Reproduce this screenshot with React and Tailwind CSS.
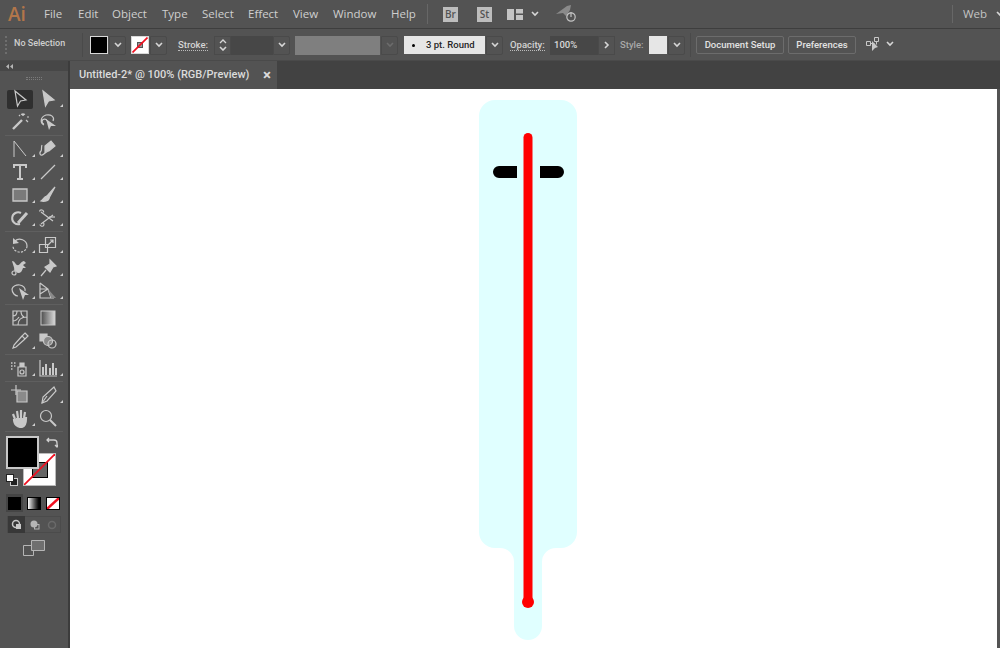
const c = "#c9c9c9";

const Chevron = ({ color = "#d6d6d6", size = 8 }) => (
  <svg className="shrink-0" width={size} height={size * 0.7} viewBox="0 0 8 5.6"><path d="M1 1l3 3 3-3" fill="none" stroke={color} strokeWidth="1.6" /></svg>
);

const ChevBox = ({ w = "w-[17px]", color, className = "" }) => (
  <div className={`${w} shrink-0 h-[19px] flex items-center justify-center border border-[#4a4a4a] rounded-r-[2px] ${className}`}><Chevron color={color} /></div>
);

const NoneSwatch = () => (
  <div className="w-[18px] h-[18px] bg-white border border-[#d8d8d8] flex items-center justify-center relative">
    <div className="w-[6px] h-[6px] border border-[#555] bg-[#999]" />
    <svg className="absolute inset-0" width="16" height="16" viewBox="0 0 16 16"><path d="M0.5 15.5L15.5 0.5" stroke="#f01020" strokeWidth="1.7" /></svg>
  </div>
);

const MenuItem = ({ children, className }) => <span className={`shrink-0 text-[11.5px] text-[#cfcfcf] leading-none ${className}`}>{children}</span>;

function MenuBar() {
  return (
    <div className="h-[29px] shrink-0 flex items-center bg-[#535353] border-b border-[#3e3e3e]">
      <span className="shrink-0 ml-[8px] w-[36px] text-[19px] font-semibold text-[#b2764a] leading-none" style={{ fontFamily: '"Open Sans"' }}>Ai</span>
      <MenuItem className="w-[34px]">File</MenuItem>
      <MenuItem className="w-[34px]">Edit</MenuItem>
      <MenuItem className="w-[50px]">Object</MenuItem>
      <MenuItem className="w-[40px]">Type</MenuItem>
      <MenuItem className="w-[46px]">Select</MenuItem>
      <MenuItem className="w-[45px]">Effect</MenuItem>
      <MenuItem className="w-[40px]">View</MenuItem>
      <MenuItem className="w-[58px]">Window</MenuItem>
      <MenuItem className="w-[36px]">Help</MenuItem>
      <div className="shrink-0 w-px h-[20px] bg-[#676767]" />
      <div className="shrink-0 ml-[15px] w-[15px] h-[15px] bg-[#bdbdbd] text-[#535353] text-[10px] font-semibold flex items-center justify-center leading-none">Br</div>
      <div className="shrink-0 ml-[19px] w-[15px] h-[15px] bg-[#bdbdbd] text-[#535353] text-[10px] font-semibold flex items-center justify-center leading-none">St</div>
      <svg className="shrink-0 ml-[15px]" width="16" height="11" viewBox="0 0 16 11"><path d="M0 0h7v11H0zM9 0h7v4.5H9zM9 6h7v5H9z" fill="#c4c4c4" /></svg>
      <div className="shrink-0 ml-[8px]"><Chevron /></div>
      <svg className="shrink-0 ml-[17px]" width="21" height="18" viewBox="0 0 21 18">
        <path d="M0 9L11 1l4-1-1 5-4 6-3-3z" fill="#8a8a8a" />
        <circle cx="15" cy="12" r="4.2" fill="#535353" stroke="#c4c4c4" strokeWidth="1.2" />
        <path d="M15 7v5" stroke="#c4c4c4" strokeWidth="1.2" />
      </svg>
      <div className="shrink-0 ml-[375px] w-px h-[18px] bg-[#676767]" />
      <span className="shrink-0 ml-[10px] text-[11.5px] text-[#c4c4c4] leading-none">Web</span>
      <div className="shrink-0 ml-[9px]"><Chevron /></div>
    </div>
  );
}

const small = { fontFamily: 'Roboto, sans-serif' };

const Label = ({ children }) => (
  <span style={small} className="inline-block whitespace-nowrap text-[9.5px] font-medium text-[#d4d4d4] leading-[11px] border-b border-dotted border-[#bbb]">{children}</span>
);

const Btn = ({ children, w }) => (
  <div style={small} className={`${w} h-[18px] border border-[#6c6c6c] rounded-[2px] flex items-center justify-center text-[9.5px] font-medium text-[#e2e2e2] whitespace-nowrap`}>{children}</div>
);

function OptionsBar() {
  return (
    <div className="h-[32px] shrink-0 flex items-center pt-[1px] bg-[#535353] border-b border-[#4a4a4a]">
      <div className="shrink-0 ml-[5px] w-[3px] h-[18px] border-l-2 border-dotted border-[#6e6e6e]" />
      <span style={small} className="shrink-0 ml-[6px] w-[52px] text-[9px] font-medium text-[#cfcfcf] whitespace-nowrap -mt-[2px]">No Selection</span>
      <div className="shrink-0 ml-[16px] w-px h-[24px] bg-[#4a4a4a]" />
      <div className="shrink-0 ml-[7px] w-[18px] h-[18px] bg-black border border-[#d8d8d8]" />
      <ChevBox className="ml-[1px]" />
      <div className="shrink-0 ml-[5px]"><NoneSwatch /></div>
      <ChevBox className="ml-[1px]" />
      <div className="shrink-0 ml-[11px] w-[31px] flex"><Label>Stroke:</Label></div>
      <div className="shrink-0 ml-[5px] w-[17px] h-[19px] border border-[#4a4a4a] flex flex-col items-center justify-center gap-[2px]">
        <svg width="8" height="5" viewBox="0 0 8 5"><path d="M1 4l3-3 3 3" fill="none" stroke="#d6d6d6" strokeWidth="1.3" /></svg>
        <Chevron />
      </div>
      <div className="shrink-0 w-[42px] h-[19px] bg-[#474747]" />
      <ChevBox />
      <div className="shrink-0 ml-[5px] w-[85px] h-[19px] bg-[#7f7f7f]" />
      <ChevBox color="#6c6c6c" className="ml-[1px]" />
      <div style={small} className="shrink-0 ml-[6px] w-[81px] h-[18px] bg-[#e6e6e6] flex items-center text-[9.5px] font-medium text-[#262626]">
        <span className="ml-[8px] w-[3px] h-[3px] rounded-full bg-black" />
        <span className="ml-[11px]">3 pt. Round</span>
      </div>
      <ChevBox className="ml-[1px]" />
      <div className="shrink-0 ml-[7px] w-[34px] flex"><Label>Opacity:</Label></div>
      <div style={small} className="shrink-0 ml-[6px] w-[48px] h-[19px] bg-[#474747] text-[9.5px] font-medium text-[#d8d8d8] flex items-center pl-[4px]">100%</div>
      <div className="shrink-0 w-[17px] h-[19px] flex items-center justify-center border border-[#4a4a4a]">
        <svg width="6" height="8" viewBox="0 0 6 8"><path d="M1 1l3 3-3 3" fill="none" stroke="#d6d6d6" strokeWidth="1.6" /></svg>
      </div>
      <span style={small} className="shrink-0 ml-[5px] w-[29px] text-[9.5px] font-medium text-[#a8a8a8]">Style:</span>
      <div className="shrink-0 w-[18px] h-[18px] bg-[#e6e6e6]" />
      <ChevBox className="ml-[1px]" />
      <div className="shrink-0 ml-[5px] w-px h-[24px] bg-[#4a4a4a]" />
      <div className="shrink-0 ml-[5px]"><Btn w="w-[88px]">Document Setup</Btn></div>
      <div className="shrink-0 ml-[4px]"><Btn w="w-[68px]">Preferences</Btn></div>
      <svg className="shrink-0 ml-[9px] -mt-[2px]" width="16" height="16" viewBox="0 0 16 16">
        <path d="M1.5 5.5h4v4h-4zM9.5 1.5h4v4h-4zM5.5 7.5h4M11.5 5.5v3" fill="none" stroke="#c8c8c8" />
        <path d="M7 5l6 6-3 1-3 3z" fill="#c8c8c8" />
      </svg>
      <div className="shrink-0 ml-[5px] -mt-[2px]"><Chevron /></div>
    </div>
  );
}

const I = ({ children }) => <svg width="20" height="20" viewBox="0 0 20 20" fill="none" stroke={c} strokeWidth="1.2">{children}</svg>;

const icons = {
  select: <I><path d="M5 2l11 9-5.500 1-3 5z" /></I>,
  direct: <I><path d="M5 2l11 9-5.500 1-3 5z" fill={c} /></I>,
  wand: <I><path d="M3 17L12 8" strokeWidth="2.400" /><path d="M13 1v3M11 2l2 1 2-1M17 5h2M16 8l2 2M9 3l1 1" /></I>,
  lasso: <I><path d="M6 13c-4-2-4-8 2-10 5-1 9 2 7 6M9 9a2.500 2.500 0 1 0-3 3" /><path d="M8 7l10 7-5 0-2 4z" fill={c} stroke="none" /></I>,
  pen2: <I><path d="M4 2v16M4 2l12 15" strokeWidth="1" /></I>,
  pen: <I><path d="M7 14c3-2 3-2 4-2l6-5-4-5-6 5z" fill={c} /><path d="M7 14c-5 5-6 0-4-2 1-1 0-4 1-6" /></I>,
  type: <I><path d="M4 6V3h12v3M10 3v14M7 17h6" strokeWidth="2" /></I>,
  line: <I><path d="M3 17L17 3" /></I>,
  rect: <I><path d="M3 4h14v12H3z" fill="#7a7a7a" stroke={c} strokeWidth="1.300" /></I>,
  brush: <I><path d="M17 2L9 11l2 2z" fill={c} /><path d="M9 11c-3 0-3 3-6 5 3 1 8 0 8-3z" fill={c} /></I>,
  shaper: <I><path d="M11 5a6 6 0 1 0-1 11" strokeWidth="2" /><path d="M8 15L17 5" strokeWidth="3" /></I>,
  scissors: <I><path d="M3 4l12 9M3 16L15 7" /><path d="M1.500 3.500a2 2 0 1 1 4 1M2 16.500a2 2 0 1 0 3-2" /><path d="M11 9h6" /></I>,
  rotate: <I><path d="M3 3l0 6 6-1z" fill={c} stroke="none" /><path d="M5 6c4-4 12-1 12 5" /><path d="M17 11c0 5-7 8-11 5-2-1-3-3-3-5" strokeDasharray="2.200 1.300" /></I>,
  scale: <I><path d="M1.500 9.500h8v8h-8zM7.500 2.500h10v10h-10zM10 10l5-5M12 5h3v3" /></I>,
  warp: <I><path d="M2 3c3 0 3 3 5 4 3 1 4-4 7-4l2 2-3 2 3 3-3 0c-1 3-2 5-5 5-2 0-2-3-4-2 1-3-1-6-2-10z" fill={c} stroke="none" /><circle cx="4" cy="15" r="2" /></I>,
  pin: <I><path d="M12 2l6 6-3 1-3 5-5-5 5-3zM8 12l-5 6" fill={c} /></I>,
  gradientFree: <I><path d="M2 8a6.500 5 0 1 1 13 2" /><path d="M8 15c-3 0-6-3-6-7" /><path d="M9 7l10 7h-4l-2 5z" fill={c} stroke="none" /></I>,
  mesh: <I><path d="M2 2v15h14M2 2l8 6 3 9M2 8h8M2 13l8-5" /><path d="M10 8l8 9h-5z" fill="#8a8a8a" stroke="none" /></I>,
  grid: <I><path d="M3 3h14v14H3zM3 8c3 0 4-2 4-5M8 17c0-5 3-8 9-8M3 13c3 0 4-1 6-4M11 3c0 3 1 5 3 6" /></I>,
  gradient: <svg width="20" height="20" viewBox="0 0 20 20"><defs><linearGradient id="g1"><stop offset="0" stopColor="#4c4c4c" /><stop offset="1" stopColor="#dadada" /></linearGradient></defs><rect x="3" y="3" width="14" height="14" fill="url(#g1)" stroke={c} /></svg>,
  dropper: <I><path d="M15 2l3 3-3 3-3-3zM12 5l-8 9-1 3 3-1 9-8" /></I>,
  blend: <I><path d="M2 3h7v7H2z" fill={c} /><circle cx="10" cy="10" r="4.500" fill="#8a8a8a" /><circle cx="14" cy="13" r="4" /></I>,
  sprayer: <I><path d="M8 9h8v9H8z" /><circle cx="12" cy="14" r="2" /><path d="M10 9V5h4v4" fill={c} /><path d="M1 5h1.500M4 5h1.500M1 8h1.500M4 8h1.500M1 11h1.500" strokeDasharray="1.500 1" strokeWidth="1.500" /></I>,
  chart: <I><path d="M2 2v16h17" /><path d="M5 17V9M8 17V6M12 17V10M15 17V5M18 17V10" strokeWidth="2" /></I>,
  artboard: <I><path d="M7 6h10v11H7z" fill="#8a8a8a" /><path d="M1 5h10M6 0v10" /></I>,
  knife: <I><path d="M16 2l2 4-9 10-5 2 1-6z" /><path d="M9 11l-5 7" /></I>,
  hand: <I><path d="M5 11L3 6M8 10L7 3M11 10V2M14 10l1-6M4 11c0 6 4 8 7 8 4 0 5-4 5-9l-1 0" fill={c} strokeWidth="2.200" /><path d="M6 10h9v6H6z" fill={c} stroke="none" /></I>,
  zoom: <I><circle cx="8" cy="8" r="5.500" /><path d="M12 12l6 6" strokeWidth="2" /></I>,
};

const Tool = ({ name, flag = true, active }) => (
  <div className="relative w-[26px] h-[23px] flex items-center justify-center">
    {active && <div className="absolute left-0 right-0 top-[3px] bottom-[1px] bg-[#2f2f2f] rounded-[2px]" />}
    <div className="relative">{icons[name]}</div>
    {flag && <div className="absolute right-[-2px] bottom-[3px] w-0 h-0 border-l-[3px] border-l-transparent border-b-[3px] border-b-[#d0d0d0]" />}
  </div>
);

const Row = ({ a, b, active, fa = true, fb = true }) => (
  <div className="flex gap-[2px] pl-[7px]">
    <Tool name={a} active={active} flag={fa} />
    <Tool name={b} flag={fb} />
  </div>
);

const Sep = () => <div className="h-[4px] flex items-center pl-[5px]"><div className="w-[58px] h-px bg-[#5f5f5f]" /></div>;

function ToolPanel() {
  return (
    <div className="w-[70px] shrink-0 flex bg-[#535353] border-r-[2px] border-[#3c3c3c]">
      <div className="w-[66px] flex flex-col">
        <div className="h-[10px] bg-[#474747] w-[68px] flex items-center pl-[6px]">
          <svg width="7" height="5" viewBox="0 0 7 5"><path d="M3 0v5L0 2.500zM7 0v5L4 2.500z" fill="#b5b5b5" /></svg>
        </div>
        <div className="h-[16px] flex items-start justify-center pt-[6px] pl-[2px]">
          <div className="w-[16px] h-[3px] border-y border-dotted border-[#7a7a7a]" />
        </div>
        <Row a="select" b="direct" active fa={false} />
        <Row a="wand" b="lasso" fa={false} fb={false} />
        <Sep />
        <Row a="pen2" b="pen" />
        <Row a="type" b="line" />
        <Row a="rect" b="brush" />
        <Row a="shaper" b="scissors" />
        <Sep />
        <Row a="rotate" b="scale" />
        <Row a="warp" b="pin" />
        <Row a="gradientFree" b="mesh" />
        <Sep />
        <Row a="grid" b="gradient" fa={false} fb={false} />
        <Row a="dropper" b="blend" fb={false} />
        <Sep />
        <Row a="sprayer" b="chart" />
        <Sep />
        <Row a="artboard" b="knife" fa={false} />
        <Row a="hand" b="zoom" fb={false} />
        <Sep />
        <div className="relative h-[54px] mt-[2px]">
          <div className="absolute left-[23px] top-[18px] w-[33px] h-[33px] bg-white border border-[#bbb] flex items-center justify-center">
            <div className="w-[16px] h-[16px] bg-[#666] border border-black" />
            <svg className="absolute inset-0" width="31" height="31" viewBox="0 0 31 31"><path d="M0 31L31 0" stroke="#f01020" strokeWidth="1.800" /></svg>
          </div>
          <div className="absolute left-[6px] top-[1px] w-[33px] h-[33px] bg-black border-2 border-[#c8c8c8]" />
          <svg className="absolute left-[46px] top-[2px]" width="12" height="12" viewBox="0 0 12 12" fill="none" stroke="#d0d0d0" strokeWidth="1.300"><path d="M1 3h7c2 0 3 1 3 3v4M3 1L1 3l2 2M9 8l2 2 1.500-2" /></svg>
          <svg className="absolute left-[6px] top-[39px]" width="12" height="12" viewBox="0 0 12 12"><rect x="4.500" y="4.500" width="7" height="7" fill="#222" stroke="#ccc" /><rect x="0.500" y="0.500" width="7" height="7" fill="#fff" stroke="#222" /></svg>
        </div>
        <div className="mt-[5px] ml-[6px] flex items-center gap-[1px] h-[18px]">
          <div className="w-[17px] h-[18px] bg-[#454545] flex items-center justify-center"><div className="w-[13px] h-[13px] bg-black" /></div>
          <div className="ml-[3px] w-[14px] h-[13px] border border-black bg-gradient-to-r from-white to-black" />
          <div className="ml-[4px] w-[14px] h-[13px] border border-black bg-white relative overflow-hidden">
            <svg className="absolute inset-0" width="12" height="11" viewBox="0 0 12 11"><path d="M0 11L12 0" stroke="#f01020" strokeWidth="2.500" /></svg>
          </div>
        </div>
        <div className="mt-[4px] ml-[7px] flex items-center h-[17px] w-[54px] border border-[#4b4b4b]">
          <div className="w-[17px] h-[17px] bg-[#383838] flex items-center justify-center">
            <svg width="11" height="11" viewBox="0 0 11 11"><circle cx="5" cy="5" r="3.500" fill="none" stroke="#c8c8c8" strokeWidth="1.500" /><rect x="5" y="5" width="5" height="5" fill="#c8c8c8" /></svg>
          </div>
          <div className="w-[18px] flex justify-center">
            <svg width="11" height="11" viewBox="0 0 11 11"><circle cx="5" cy="5" r="3.500" fill="#b5b5b5" /><rect x="5.500" y="5.500" width="4.500" height="4.500" fill="none" stroke="#b5b5b5" /></svg>
          </div>
          <div className="w-[17px] flex justify-center">
            <svg width="10" height="10" viewBox="0 0 10 10"><circle cx="5" cy="5" r="3.500" fill="none" stroke="#6a6a6a" strokeWidth="1.500" /></svg>
          </div>
        </div>
        <div className="mt-[7px] flex justify-center pl-[2px]">
          <svg width="22" height="16" viewBox="0 0 22 16"><path d="M0.500 5.500h10v10H0.500z" fill="none" stroke="#b5b5b5" /><path d="M8.500 0.500h13v10h-13z" fill="#6f6f6f" stroke="#b5b5b5" /></svg>
        </div>
      </div>
    </div>
  );
}

function Canvas() {
  return (
    <div className="flex-1 bg-white overflow-hidden">
      <svg width="930" height="559" viewBox="70 89 930 559">
        <path d="M495 100h66a16 16 0 0 1 16 16v416a16 16 0 0 1-16 16h-5a14 14 0 0 0-14 14v64a14 14 0 0 1-28 0v-64a14 14 0 0 0-14-14h-5a16 16 0 0 1-16-16V116a16 16 0 0 1 16-16z" fill="#e0ffff" />
        <path d="M499 166h18v12h-18a6 6 0 0 1 0-12zM540 166h18a6 6 0 0 1 0 12h-18z" fill="#000" />
        <path d="M528 137.500V602" stroke="#ff0000" strokeWidth="9" strokeLinecap="round" fill="none" />
        <circle cx="528" cy="602" r="6" fill="#ff0000" />
      </svg>
    </div>
  );
}

export default function App() {
  return (
    <div className="w-[1000px] h-[648px] overflow-hidden flex flex-col bg-[#535353]" style={{ fontFamily: '"Open Sans", sans-serif' }}>
      <MenuBar />
      <OptionsBar />
      <div className="flex-1 flex min-h-0">
        <ToolPanel />
        <div className="flex-1 flex flex-col min-w-0 bg-[#424242]">
          <div className="h-[28px] shrink-0 flex">
            <div style={small} className="w-[207px] bg-[#535353] flex items-center text-[11px] font-medium text-[#dcdcdc]">
              <span className="ml-[9px]">Untitled-2* @ 100% (RGB/Preview)</span>
              <span className="ml-auto mr-[6px] text-[15px] font-bold leading-none">×</span>
            </div>
          </div>
          <div className="flex-1 flex min-h-0">
            <Canvas />
            <div className="w-[3px] bg-[#535353]" />
          </div>
        </div>
      </div>
    </div>
  );
}
